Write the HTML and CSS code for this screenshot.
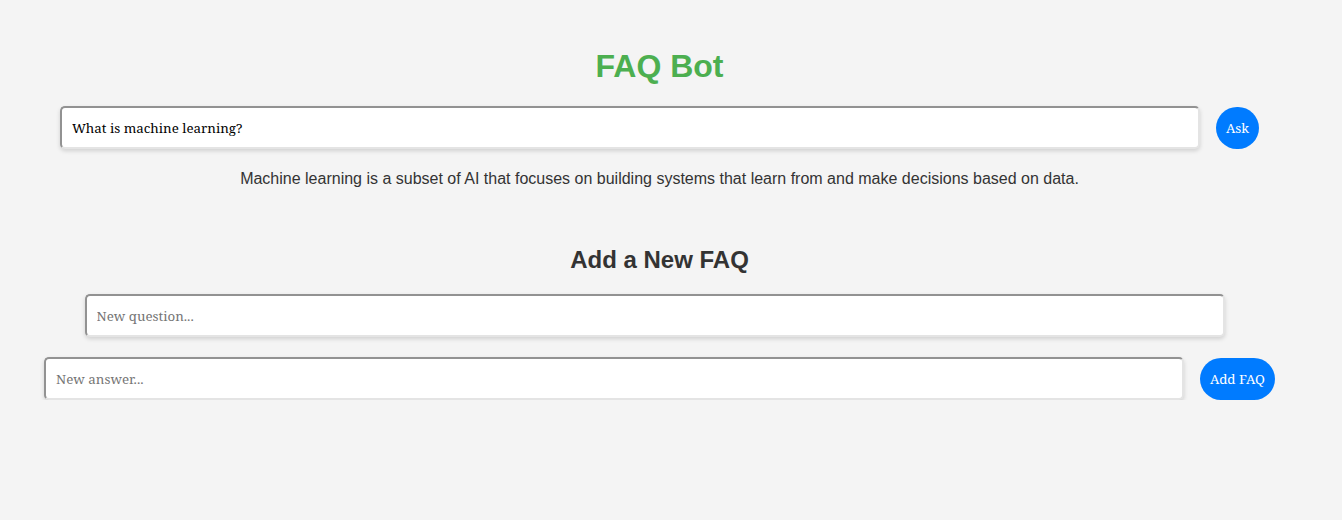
FILE: index.html
```html
<!DOCTYPE html>
<html lang="en">
<head>
<meta charset="utf-8">
<title>FAQ Bot</title>
<link rel="stylesheet" href="styles.css">
</head>
<body>
<main class="app">
  <h1 class="title">FAQ Bot</h1>
  <div class="row">
    <input class="field" type="text" value="What is machine learning?" placeholder="Ask a question...">
    <button class="btn">Ask</button>
  </div>
  <p class="answer">Machine learning is a subset of AI that focuses on building systems that learn from and make decisions based on data.</p>
  <h2 class="subtitle">Add a New FAQ</h2>
  <div class="row">
    <input class="field" type="text" placeholder="New question...">
  </div>
  <div class="row row-last">
    <input class="field" type="text" placeholder="New answer...">
    <button class="btn">Add FAQ</button>
  </div>
</main>
</body>
</html>
```
FILE: styles.css
```css
html, body {
  margin: 0;
  padding: 0;
  background: #f4f4f4;
}
body {
  font-family: "Liberation Sans", Arial, sans-serif;
  color: #333;
}
.app {
  width: 1319px;
  padding-top: 27px;
  display: flex;
  flex-direction: column;
  align-items: center;
}
.title {
  margin: 21px 0 21px;
  font-size: 32px;
  font-weight: bold;
  color: #4caf50;
  line-height: 37px;
}
.row {
  display: flex;
  align-items: center;
  justify-content: center;
  gap: 6px;
}
.row-last {
  margin-top: 20px;
}
.field {
  box-sizing: border-box;
  width: 1140px;
  height: 43px;
  margin-right: 10px;
  padding: 10px;
  border: 2px solid;
  border-color: #929292 #e4e4e4 #e4e4e4 #929292;
  border-radius: 5px;
  background: #fff;
  box-shadow: 0 2px 4px rgba(0, 0, 0, 0.15);
  color: #000;
  font-family: "Noto Serif", "DejaVu Serif", serif;
  font-size: 13.33px;
}
.field::placeholder {
  color: #757575;
}
.btn {
  box-sizing: border-box;
  height: 42px;
  padding: 0 10px;
  border: none;
  border-radius: 50px;
  background: #007bff;
  color: #fff;
  cursor: pointer;
  font-family: "Noto Serif", "DejaVu Serif", serif;
  font-size: 13.33px;
}
.answer {
  margin: 21px 0 0;
  font-size: 16px;
  line-height: 18px;
  color: #333;
}
.subtitle {
  margin: 58px 0 20px;
  font-size: 24px;
  line-height: 28px;
  font-weight: bold;
  color: #333;
}
```
